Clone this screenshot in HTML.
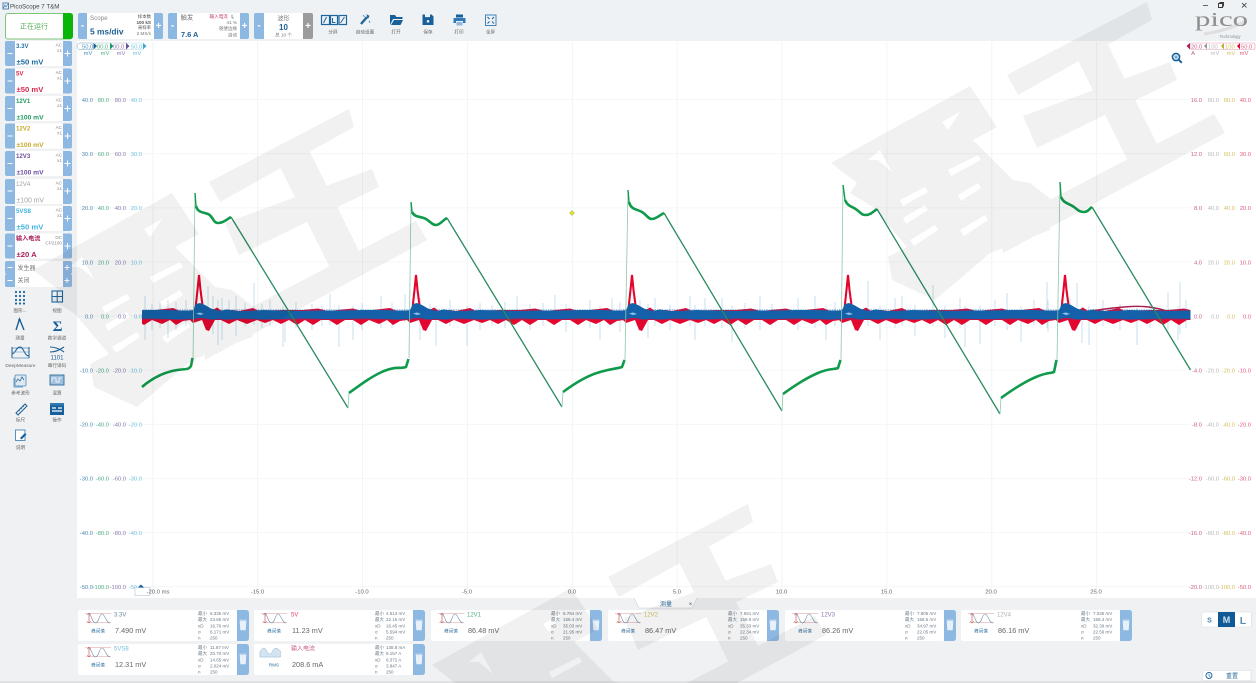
<!DOCTYPE html>
<html lang="zh"><head><meta charset="utf-8"><title>PicoScope 7 T&amp;M</title>
<style>
html,body{margin:0;padding:0;width:1256px;height:683px;overflow:hidden;background:#f0f1f2}
svg{display:block;position:absolute;left:0;top:0}
text{font-family:"Liberation Sans","Noto Sans CJK SC",sans-serif;fill:#555}
.ax text{font-size:5.800px;text-anchor:end}
.c1 text{fill:#4f8db5}.c2 text{fill:#4fae82}.c3 text{fill:#8e78b0}.c4 text{fill:#74c2de}
.r1 text{fill:#c8608a}.r2 text{fill:#b8b8b8}.r3 text{fill:#d3c060}.r4 text{fill:#e25c7c}
.tk{font-size:5.900px;text-anchor:middle;fill:#666}
.nm{font-size:6.100px;font-weight:bold}
.rg{font-size:7.700px;font-weight:bold}
.rh{font-size:6.700px;font-weight:bold}
.ac{font-size:4.600px;fill:#888;text-anchor:end}
.tl{font-size:4.600px;fill:#666;text-anchor:middle}
.ic{font-size:4.600px;fill:#666;text-anchor:middle}
.st{font-size:4.500px;fill:#6b7b88}
.cn{font-size:6px;fill:#777}
.cv{font-size:7.300px;fill:#666}
.cl{font-size:4.600px;fill:#2f6d9c;text-anchor:middle}
.b{fill:#8db8e2}
.pm{fill:#fff;font-size:10px;text-anchor:middle;font-weight:bold}
.blk{fill:none;stroke:#1c669f;stroke-width:1.200}
.gr{fill:none;stroke:#0f9a4c;stroke-width:2.600;stroke-linejoin:round}
.rm{fill:none;stroke:#2a8a5e;stroke-width:1.300}
.rs{fill:none;stroke:#8cc8aa;stroke-width:.8}
</style></head><body>
<svg width="1256" height="683" viewBox="0 0 1256 683" xmlns="http://www.w3.org/2000/svg">
<defs>
<clipPath id="tr"><rect x="142" y="250" width="1048.500" height="110"/></clipPath>
<g id="per">
<path fill="#e3062f" d="M-3 311L4 312 12 312 18 311 24 307.500 29 311 40 310 46 311 60 308 66 311 90 310 110 310 125 308.500 135 311 160 308.500 168 311 180 310 197 308 204 311 214 311 214 320 207 321 200 325 194 320 186 324 176 320 168 325 160 320 152 320 144 325 136 320 128 320 120 325 112 320 104 325 96 320 88 324 80 320 72 323 64 320 54 324 44 320 36 324 28 320 22 320 16 331 13 330 9 320 0 323 -3 320Z"/>
<path fill="none" stroke="#e3062f" stroke-width="2.100" d="M2 313L4.500 290 6 275 7.500 290 10.500 313"/>
<path d="M-3 314.500H214" stroke="#1561a9" stroke-width="11" stroke-dasharray=".6 1.100" opacity=".55"/>
<path fill="#1561a9" d="M-3 310.500L0 310 3 304 7 303 12 305 18 308.500 26 311 34 309.500 44 311 56 311 70 310 90 310.500 110 311 130 310.500 150 310.500 170 310 190 310 205 310.500 214 310.500 214 319 205 319.500 190 319 170 318.500 150 319 130 319 110 318.500 90 319 70 319.500 50 318.500 34 319.500 26 319 18 319.500 10 318 4 318 0 319.500 -3 319Z"/>
<path fill="#8cc6ea" d="M3 313.500L7 312.500 11 314 7 315Z"/>
</g>
<g id="card"><rect width="159" height="31" rx="2" fill="#fff"/><path d="M159 0h9q3 0 3 3v25q0 3-3 3h-9Z" class="b"/><path d="M162 11h6l-.6 9h-4.800Z M161.500 10h7" fill="#e8f1fa" stroke="#e8f1fa" stroke-width=".6"/></g>
<g id="wv"><path d="M0 1.500h26M1 10.500h25" stroke="#d99" stroke-width=".5"/><path d="M4 1.500v9" stroke="#c44" stroke-width=".6"/><path d="M2 3l2-2 2 2M2 9l2 2 2-2" fill="none" stroke="#c44" stroke-width=".5"/><path d="M3 2C7 2 7 11 10.500 11S14 2 17 2s4 9 8 9" fill="none" stroke="#6f8ea8" stroke-width=".6"/></g>
<g id="wm">
<path d="M1007 75L1147 2 1152 20 1018 95ZM1023 116L1170 62 1177 80 1037 148ZM1000 226L1214 114 1225 133 1003 253ZM1073 50L1103 35 1160 150 1130 165Z"/>
<path fill-rule="evenodd" d="M831 163L970 86 997 127 973 140 1013 180 1030 183 1052 200 1050 230 990 253 935 300 892 280 888 257 907 247 873 207 850 193 857 183ZM868 160L880 150 892 172 878 160ZM942 122L960 112 948 130ZM900 200L925 187 928 192 903 206ZM948 170L978 155 981 160 951 176ZM903 218L925 205 928 210 906 224ZM958 195L978 183 981 188 961 201ZM910 240L935 225 938 230 914 246ZM960 230L985 215 988 220 964 236Z"/>
</g>
</defs>

<!-- backgrounds -->
<rect width="1256" height="683" fill="#f0f1f2"/>
<rect width="1256" height="41" fill="#eff2f5"/>
<rect x="77" y="41" width="1179" height="557" fill="#fff"/>
<rect y="681" width="1256" height="2" fill="#e0e1e2"/>

<!-- grid -->
<g stroke="#f4f6f6" stroke-width=".8">
<path d="M78 99.500H1190M78 153.700H1190M78 207.800H1190M78 262H1190M78 316H1190M78 370H1190M78 424.300H1190M78 478.400H1190M78 532.500H1190M78 586.500H1190"/>
<path stroke="#edf3f3" d="M153 42V597M257.700 42V597M362.500 42V597M467.400 42V597M572.300 42V597M677.200 42V597M782 42V597M886.900 42V597M991.800 42V597M1096.700 42V597"/>
</g>

<!-- title bar -->
<rect x="3" y="3" width="5.500" height="6" fill="none" stroke="#2c6ea6" stroke-width=".8"/>
<path d="M3.500 8l1.500-3 1 2 2-3" fill="none" stroke="#2c6ea6" stroke-width=".6"/>
<text x="10" y="8.500" style="font-size:6.200px;fill:#444">PicoScope 7 T&amp;M</text>
<path d="M1203 5.500h5" stroke="#444" stroke-width=".8"/>
<path d="M1218.500 3.500h4v4h-4zM1220 3.500v-1h3.500v3.500h-1" fill="none" stroke="#333" stroke-width=".9"/>
<path d="M1242 3l4.500 4.500M1246.500 3L1242 7.500" stroke="#333" stroke-width=".8"/>

<!-- run button -->
<rect x="5.500" y="13.500" width="66.500" height="25.500" rx="2.500" fill="#fff" stroke="#7cc77c"/>
<path d="M63 13h7q3 0 3 3v20q0 3-3 3h-7Z" fill="#09b509"/>
<text x="34" y="28.500" style="font-size:7px;fill:#5cb05c;text-anchor:middle">正在运行</text>

<!-- scope -->
<rect x="78" y="13" width="85" height="26" rx="2" fill="#fff"/>
<path d="M87 13h-7q-2 0-2 2v22q0 2 2 2h7ZM154 13h7q2 0 2 2v22q0 2-2 2h-7Z" class="b"/>
<text x="82.500" y="28.500" class="pm">-</text><text x="158.500" y="29" class="pm">+</text>
<text x="90" y="20" style="font-size:6.200px;fill:#888">Scope</text>
<text x="90" y="34.500" style="font-size:8.400px;font-weight:bold;fill:#1c5f94">5 ms/div</text>
<text x="151" y="18" style="font-size:4.400px;text-anchor:end">样本数</text><text x="151" y="24" style="font-size:4.600px;font-weight:bold;text-anchor:end;fill:#555">100 kS</text><text x="151" y="29" style="font-size:4.400px;text-anchor:end">采样率</text><text x="151" y="35" style="font-size:4.600px;text-anchor:end;fill:#777">2 MS/s</text>

<!-- trigger -->
<rect x="168" y="13" width="81" height="26" rx="2" fill="#fff"/>
<path d="M177 13h-7q-2 0-2 2v22q0 2 2 2h7ZM240 13h7q2 0 2 2v22q0 2-2 2h-7Z" class="b"/>
<text x="172.500" y="28.500" class="pm">-</text><text x="244.500" y="29" class="pm">+</text>
<text x="180.500" y="19.500" style="font-size:6.400px;fill:#777">触发</text>
<text x="181" y="37" style="font-size:7.400px;font-weight:bold;fill:#1c5f94">7.6 A</text>
<text x="209.500" y="18" style="font-size:4.600px;fill:#c2386c">输入电流</text>
<path d="M232 14.500v3.500h2" fill="none" stroke="#555" stroke-width=".6"/>
<text x="237" y="24" style="font-size:4.600px;text-anchor:end;fill:#777">41 %</text>
<text x="237" y="30" style="font-size:4.500px;text-anchor:end;fill:#777">随便边缘</text>
<text x="237" y="36.500" style="font-size:4.500px;text-anchor:end;fill:#777">自动</text>

<!-- waveforms -->
<rect x="254" y="13" width="59" height="26" rx="2" fill="#fff"/>
<path d="M264 13h-8q-2 0-2 2v22q0 2 2 2h8Z" class="b"/>
<path d="M303 13h8q2 0 2 2v22q0 2-2 2h-8Z" fill="#9c9c9c"/>
<text x="259" y="28.500" class="pm">-</text><text x="308" y="29" class="pm">+</text>
<text x="283.500" y="20.500" style="font-size:6px;text-anchor:middle;fill:#777">波形</text>
<text x="283.500" y="30" style="font-size:8px;font-weight:bold;text-anchor:middle;fill:#1c5f94">10</text>
<text x="283.500" y="36.500" style="font-size:4.600px;text-anchor:middle;fill:#777">总 10 个</text>

<!-- toolbar -->
<g class="blk"><rect x="321.500" y="15.500" width="8" height="9"/><rect x="330.500" y="15.500" width="7" height="9"/><rect x="339" y="15.500" width="7.500" height="9"/>
<path d="M323.500 23l3-6M332.500 18v4.500h3M340.500 23l4-6" stroke-width="1"/></g>
<text x="333" y="33.500" class="tl">分屏</text>
<path d="M361 24l6-7" stroke="#1c669f" stroke-width="2.400"/><path d="M367 15l2 1-1 2zM363 15.500l1.500 1M369 21l1 1.500" stroke="#1c669f" fill="#1c669f" stroke-width=".8"/>
<text x="365" y="33.500" class="tl">自动设置</text>
<path d="M390 25V15h5l1.500 2h6v2h-9.500l-3 6zM391 25l3-5h9l-2.500 5z" fill="#17609b"/>
<text x="396" y="33.500" class="tl">打开</text>
<path d="M422.500 14.500h9l2 2v8.500h-11z" fill="#17609b"/><rect x="425" y="14.500" width="5" height="2.600" fill="#eff2f5"/><circle cx="428" cy="21.300" r="1.300" fill="#eff2f5"/>
<text x="428" y="33.500" class="tl">保存</text>
<path d="M456 14.500h7v3h-7z" fill="#17609b"/><path d="M453.500 18h12v5h-2.500v-2h-7v2h-2.500z" fill="#2f79b5"/><rect x="456.500" y="22" width="6" height="3.500" fill="#8db8e2"/>
<text x="459" y="33.500" class="tl">打印</text>
<rect x="485.500" y="15" width="10.500" height="10.500" fill="none" stroke="#2f79b5" stroke-width=".9"/><path d="M487.500 17l2 2M494 17l-2 2M487.500 23.500l2-2M494 23.500l-2-2" stroke="#17609b" stroke-width="1"/>
<text x="490.500" y="33.500" class="tl">全屏</text>

<!-- pico logo -->
<path d="M1204 34q22-3 42-13" fill="none" stroke="#dedede" stroke-width="3"/>
<text x="1195" y="26" textLength="53" lengthAdjust="spacingAndGlyphs" style="font-family:'Liberation Serif',serif;font-size:20px;fill:#8e8e8e">pico</text>
<text x="1230" y="38" style="font-size:4.200px;fill:#8e8e8e;text-anchor:middle">Technology</text>

<!-- channels -->
<g id="chs">
<path class="b" d="M15 41h-8q-2 0-2 2v21q0 2 2 2h8ZM63 41h7q2 0 2 2v21q0 2-2 2h-7ZM15 68.500h-8q-2 0-2 2v21q0 2 2 2h8ZM63 68.500h7q2 0 2 2v21q0 2-2 2h-7ZM15 96h-8q-2 0-2 2v21q0 2 2 2h8ZM63 96h7q2 0 2 2v21q0 2-2 2h-7ZM15 123.500h-8q-2 0-2 2v21q0 2 2 2h8ZM63 123.500h7q2 0 2 2v21q0 2-2 2h-7ZM15 151h-8q-2 0-2 2v21q0 2 2 2h8ZM63 151h7q2 0 2 2v21q0 2-2 2h-7ZM15 179h-8q-2 0-2 2v21q0 2 2 2h8ZM63 179h7q2 0 2 2v21q0 2-2 2h-7ZM15 206h-8q-2 0-2 2v21q0 2 2 2h8ZM63 206h7q2 0 2 2v21q0 2-2 2h-7ZM15 233.500h-8q-2 0-2 2v21q0 2 2 2h8ZM63 233.500h7q2 0 2 2v21q0 2-2 2h-7ZM15 261h-8q-2 0-2 1.500v10q0 1.500 2 1.500h8ZM63 261h7q2 0 2 1.500v10q0 1.500-2 1.500h-7ZM15 274h-8q-2 0-2 1.500v10q0 1.500 2 1.500h8ZM63 274h7q2 0 2 1.500v10q0 1.500-2 1.500h-7Z"/>
<g fill="#fff"><rect x="15" y="41" width="48" height="25"/><rect x="15" y="68.500" width="48" height="25"/><rect x="15" y="96" width="48" height="25"/><rect x="15" y="123.500" width="48" height="25"/><rect x="15" y="151" width="48" height="25"/><rect x="15" y="179" width="48" height="25"/><rect x="15" y="206" width="48" height="25"/><rect x="15" y="233.500" width="48" height="25"/><rect x="15" y="261" width="48" height="26"/></g>
<g stroke="#fff" stroke-width="1">
<path d="M7.500 53.500h5M7.500 81h5M7.500 108.500h5M7.500 136h5M7.500 163.500h5M7.500 191h5M7.500 218.500h5M7.500 246h5M7.500 267.500h5M7.500 280.500h5"/>
<path d="M64.500 53.500h6M67.500 50.500v6M64.500 81h6M67.500 78v6M64.500 108.500h6M67.500 105.500v6M64.500 136h6M67.500 133v6M64.500 163.500h6M67.500 160.500v6M64.500 191h6M67.500 188v6M64.500 218.500h6M67.500 215.500v6M64.500 246h6M67.500 243v6M64.500 267.500h5M67 265v5M64.500 280.500h5M67 278v5"/>
</g>
<text x="16" y="48" class="nm" style="fill:#2a72a8">3.3V</text><text x="16.500" y="64.500" class="rg" style="fill:#1c6aa0">±50 mV</text><text x="62" y="46.500" class="ac">AC</text><text x="62" y="52" class="ac">x1</text>
<text x="16" y="75.500" class="nm" style="fill:#d8264e">5V</text><text x="16.500" y="92" class="rg" style="fill:#d8264e">±50 mV</text><text x="62" y="74" class="ac">AC</text><text x="62" y="79.500" class="ac">x1</text>
<text x="16" y="103" class="nm" style="fill:#1f9a60">12V1</text><text x="16.500" y="119.500" class="rh" style="fill:#1f9a60">±100 mV</text><text x="62" y="101.500" class="ac">AC</text><text x="62" y="107" class="ac">x1</text>
<text x="16" y="130.500" class="nm" style="fill:#c9a82e">12V2</text><text x="16.500" y="147" class="rh" style="fill:#c9a82e">±100 mV</text><text x="62" y="129" class="ac">AC</text><text x="62" y="134.500" class="ac">x1</text>
<text x="16" y="158" class="nm" style="fill:#6a4c9c">12V3</text><text x="16.500" y="174.500" class="rh" style="fill:#6a4c9c">±100 mV</text><text x="62" y="156.500" class="ac">AC</text><text x="62" y="162" class="ac">x1</text>
<text x="16" y="186" style="font-size:6.100px;fill:#a0a0a0">12V4</text><text x="16.500" y="202.500" style="font-size:6.900px;fill:#a0a0a0">±100 mV</text><text x="62" y="184.500" class="ac">AC</text><text x="62" y="190" class="ac">x1</text>
<text x="16" y="213" class="nm" style="fill:#3fb4e0">5VS8</text><text x="16.500" y="229.500" class="rg" style="fill:#3fb4e0">±50 mV</text><text x="62" y="211.500" class="ac">AC</text><text x="62" y="217" class="ac">x1</text>
<text x="16" y="240.500" class="nm" style="fill:#a8205a">输入电流</text><text x="16.500" y="257" class="rg" style="fill:#a8205a">±20 A</text><text x="62" y="239" class="ac">DC</text><text x="62" y="244.500" class="ac">CP2100</text>
<text x="17.500" y="270" style="font-size:6px;fill:#777">发生器</text>
<text x="17.500" y="282.500" style="font-size:6px;fill:#777">关闭</text>
</g>

<!-- sidebar icons -->
<g fill="#1c669f"><circle cx="16" cy="292" r="1.100"/><circle cx="20" cy="292" r="1.100"/><circle cx="24" cy="292" r="1.100"/><circle cx="16" cy="296" r="1.100"/><circle cx="20" cy="296" r="1.100"/><circle cx="24" cy="296" r="1.100"/><circle cx="16" cy="300" r="1.100"/><circle cx="20" cy="300" r="1.100"/><circle cx="24" cy="300" r="1.100"/><circle cx="16" cy="303.500" r="1.100"/><circle cx="20" cy="303.500" r="1.100"/><circle cx="24" cy="303.500" r="1.100"/></g>
<text x="20" y="312" class="ic">图形...</text>
<rect x="52" y="291" width="10.500" height="11" fill="none" stroke="#1c669f" stroke-width="1.100"/><path d="M57.200 291v11M52 296.500h10.500" stroke="#1c669f" stroke-width="1"/>
<text x="57" y="312" class="ic">视图</text>
<path d="M16 330l3.500-11 4.500 11" fill="none" stroke="#1c5f94" stroke-width="1.400"/><circle cx="19.500" cy="320" r="1.300" fill="#1c5f94"/>
<text x="20" y="339.500" class="ic">测量</text>
<text x="57.500" y="331" style="font-size:15px;font-weight:bold;fill:#17609b;text-anchor:middle;font-family:'Liberation Serif',serif">Σ</text>
<text x="57" y="339.500" class="ic">数学通道</text>
<rect x="12" y="348" width="17" height="10" fill="none" stroke="#2a78b5" stroke-width=".6"/><path d="M12 358V347M29 358V347" stroke="#1c5f94" stroke-width="1"/><path d="M12 354c4-1 4-7 8-7s4 9 9 9" fill="none" stroke="#1c5f94" stroke-width="1"/><path d="M12 352h17" stroke="#4a90c8" stroke-width=".6"/>
<text x="20.500" y="367" class="ic" style="font-size:4.800px">DeepMeasure</text>
<path d="M50 347q7 0 14 5M50 352q7 0 14-5" fill="none" stroke="#1c5f94" stroke-width="1.100"/>
<text x="57" y="359.500" style="font-size:6px;fill:#1c5f94;text-anchor:middle">1101</text>
<text x="57" y="367" class="ic">串行译码</text>
<rect x="15" y="375" width="11" height="11" rx="1" fill="#dfe9f2" stroke="#4a88b8" stroke-width=".8"/><path d="M16 382l2-3 2 2 2-4 2 3" fill="none" stroke="#1c5f94" stroke-width=".7"/><path d="M14 378v9h9" fill="none" stroke="#4a88b8" stroke-width=".8"/>
<text x="20.500" y="394.500" class="ic">参考波形</text>
<rect x="50" y="375" width="14" height="10" fill="#9fc0dc" stroke="#1c5f94" stroke-width=".8"/><path d="M52 382v-4h4v4h3v-4h3" fill="none" stroke="#fff" stroke-width=".8"/>
<text x="57" y="394.500" class="ic">混算</text>
<path d="M16 413l9-9 2 2-9 9z" fill="none" stroke="#1c5f94" stroke-width="1"/><path d="M19 410l1 1M21 408l1 1M23 406l1 1" stroke="#1c5f94" stroke-width=".6"/>
<text x="20.500" y="421.500" class="ic">标尺</text>
<rect x="50" y="404" width="14" height="11" fill="#17609b"/><rect x="50" y="403" width="14" height="2.500" fill="#2f79b5"/><path d="M52 408h4M58 408h4M52 411h10" stroke="#fff" stroke-width="1.200"/>
<text x="57" y="421.500" class="ic">操作</text>
<rect x="15.500" y="430" width="9.500" height="10.500" fill="#fff" stroke="#4a88b8" stroke-width=".9"/><path d="M20 438l5-5 1.500 1.500-5 5z" fill="#17609b"/>
<text x="20.500" y="449" class="ic">说明</text>

<!-- left axis -->
<g class="ax">
<g class="c1"><text x="93" y="102">40.0</text><text x="93" y="156">30.0</text><text x="93" y="210">20.0</text><text x="93" y="264.300">10.0</text><text x="93" y="318.300">0.0</text><text x="93" y="372.300">-10.0</text><text x="93" y="426.600">-20.0</text><text x="93" y="480.700">-30.0</text><text x="93" y="534.800">-40.0</text><text x="93" y="588.800">-50.0</text></g>
<g class="c2"><text x="109" y="102">80.0</text><text x="109" y="156">60.0</text><text x="109" y="210">40.0</text><text x="109" y="264.300">20.0</text><text x="109" y="318.300">0.0</text><text x="109" y="372.300">-20.0</text><text x="109" y="426.600">-40.0</text><text x="109" y="480.700">-60.0</text><text x="109" y="534.800">-80.0</text><text x="109" y="588.800">-100.0</text></g>
<g class="c3"><text x="126" y="102">80.0</text><text x="126" y="156">60.0</text><text x="126" y="210">40.0</text><text x="126" y="264.300">20.0</text><text x="126" y="318.300">0.0</text><text x="126" y="372.300">-20.0</text><text x="126" y="426.600">-40.0</text><text x="126" y="480.700">-60.0</text><text x="126" y="534.800">-80.0</text><text x="126" y="588.800">-100.0</text></g>
<g class="c4"><text x="142" y="102">40.0</text><text x="142" y="156">30.0</text><text x="142" y="210">20.0</text><text x="142" y="264.300">10.0</text><text x="142" y="318.300">0.0</text><text x="142" y="372.300">-10.0</text><text x="142" y="426.600">-20.0</text><text x="142" y="480.700">-30.0</text><text x="142" y="534.800">-40.0</text><text x="142" y="588.800">-50.0</text></g>
</g>
<!-- right axis -->
<g class="ax">
<g class="r1"><text x="1202" y="102">16.0</text><text x="1202" y="156">12.0</text><text x="1202" y="210">8.0</text><text x="1202" y="264.300">4.0</text><text x="1202" y="318.300">0.0</text><text x="1202" y="372.300">-4.0</text><text x="1202" y="426.600">-8.0</text><text x="1202" y="480.700">-12.0</text><text x="1202" y="534.800">-16.0</text><text x="1202" y="588.800">-20.0</text></g>
<g class="r2"><text x="1219" y="102">80.0</text><text x="1219" y="156">60.0</text><text x="1219" y="210">40.0</text><text x="1219" y="264.300">20.0</text><text x="1219" y="318.300">0.0</text><text x="1219" y="372.300">-20.0</text><text x="1219" y="426.600">-40.0</text><text x="1219" y="480.700">-60.0</text><text x="1219" y="534.800">-80.0</text><text x="1219" y="588.800">-100.0</text></g>
<g class="r3"><text x="1235" y="102">80.0</text><text x="1235" y="156">60.0</text><text x="1235" y="210">40.0</text><text x="1235" y="264.300">20.0</text><text x="1235" y="318.300">0.0</text><text x="1235" y="372.300">-20.0</text><text x="1235" y="426.600">-40.0</text><text x="1235" y="480.700">-60.0</text><text x="1235" y="534.800">-80.0</text><text x="1235" y="588.800">-100.0</text></g>
<g class="r4"><text x="1251" y="102">40.0</text><text x="1251" y="156">30.0</text><text x="1251" y="210">20.0</text><text x="1251" y="264.300">10.0</text><text x="1251" y="318.300">0.0</text><text x="1251" y="372.300">-10.0</text><text x="1251" y="426.600">-20.0</text><text x="1251" y="480.700">-30.0</text><text x="1251" y="534.800">-40.0</text><text x="1251" y="588.800">-50.0</text></g>
</g>

<!-- channel headers -->
<rect x="77" y="43" width="18" height="6.500" rx="3" fill="#fff" stroke="#6fa3c8" stroke-width=".5"/>
<rect x="95" y="43" width="16" height="6.500" fill="#fff" stroke="#7cc0a0" stroke-width=".4"/>
<rect x="111" y="43" width="16" height="6.500" fill="#fff" stroke="#a795c2" stroke-width=".4"/>
<rect x="127" y="43" width="16" height="6.500" fill="#fff" stroke="#9bd3e8" stroke-width=".4"/>
<path d="M93.500 43l3.500 3-3.500 3.500z" fill="#1c5f94"/><path d="M110 43l3.500 3-3.500 3.500z" fill="#0f9a6a"/><path d="M126 43l3.500 3-3.500 3.500z" fill="#6a4c9c"/><path d="M143 43l3.500 3-3.500 3.500z" fill="#3fa4d8"/>
<text x="82" y="48.500" style="font-size:5.800px;fill:#4f8db5">50.0</text><text x="97" y="48.500" style="font-size:5.800px;fill:#4fae82">00.0</text><text x="113" y="48.500" style="font-size:5.800px;fill:#8e78b0">00.0</text><text x="131" y="48.500" style="font-size:5.800px;fill:#74c2de">50.0</text>
<text x="88" y="55" class="tk" style="font-size:5.800px;fill:#4f8db5">mV</text><text x="105" y="55" class="tk" style="font-size:5.800px;fill:#4fae82">mV</text><text x="121" y="55" class="tk" style="font-size:5.800px;fill:#8e78b0">mV</text><text x="137" y="55" class="tk" style="font-size:5.800px;fill:#74c2de">mV</text>

<rect x="1190" y="43" width="65" height="6.500" rx="1.500" fill="#fff" stroke="#e39ab4" stroke-width=".6"/>
<path d="M1190 43l-3.500 3 3.500 3.500z" fill="#a8205a"/><path d="M1207 43l-3 3 3 3.500z" fill="#999"/><path d="M1224 43l-3 3 3 3.500z" fill="#c9a82e"/><path d="M1240 43l-3 3 3 3.500z" fill="#e3062f"/>
<text x="1191" y="48.500" style="font-size:5.800px;fill:#c8608a">20.0</text><text x="1208" y="48.500" style="font-size:5.800px;fill:#b8b8b8">100</text><text x="1225" y="48.500" style="font-size:5.800px;fill:#d3c060">100</text><text x="1241" y="48.500" style="font-size:5.800px;fill:#e25c7c">50.0</text>
<text x="1193" y="55" class="tk" style="font-size:5.800px;fill:#c8608a">A</text><text x="1215" y="55" class="tk" style="font-size:5.800px;fill:#b8b8b8">mV</text><text x="1231" y="55" class="tk" style="font-size:5.800px;fill:#d3c060">mV</text><text x="1244" y="55" class="tk" style="font-size:5.800px;fill:#e25c7c">mV</text>

<!-- magnifier -->
<circle cx="1176" cy="57" r="3.600" fill="#cfe2f2" stroke="#17609b" stroke-width="1.500"/><path d="M1178.800 59.800l3 3" stroke="#17609b" stroke-width="2"/><path d="M1174.500 57h3M1176 55.500v3" stroke="#17609b" stroke-width=".6"/>

<!-- spikes -->
<path fill="none" stroke="#a3cbe2" stroke-width=".6" d="M145 296V340M152 304V330M160 303V328M168 300V338M176 302V330M186 300V326M208 286V330M213 296V334M218 300V345M222 298V340M229 300V322M236 296V336M245 303V326M254 283V325M262 304V328M270 300V326M283 306V347M285 310V342M296 302V328M312 304V330M322 306V326M330 294V325M339 305V347M353 306V340M362 303V330M381 296V328M392 303V328M405 294V322M420 298V340M430 304V322M436 306V346M450 300V326M467 306V346M480 303V330M492 305V326M505 302V328M517 296V325M530 304V330M543 303V326M555 295V325M566 304V332M590 300V328M600 306V340M612 298V326M620 302V332M640 300V328M648 304V338M655 298V326M670 305V330M690 296V326M695 305V340M705 298V326M722 298V328M732 306V342M745 303V328M760 296V330M772 304V326M798 298V330M815 296V328M826 306V340M835 302V326M868 281V326M880 306V340M895 298V328M902 296V326M915 305V336M933 285V326M945 306V338M960 298V328M965 306V347M980 306V344M995 300V326M1007 293V330M1021 306V342M1034 300V325M1047 282V328M1048 300V332M1070 298V326M1077 283V330M1082 306V343M1089 306V345M1103 300V326M1120 304V330M1137 306V345M1150 302V328M1168 292V330M1178 306V340M1180 282V334M1186 300V328"/>

<!-- red + blue bands -->
<g clip-path="url(#tr)">
<use href="#per" x="-24"/><use href="#per" x="193"/><use href="#per" x="410"/><use href="#per" x="626"/><use href="#per" x="842"/><use href="#per" x="1059"/>
</g>
<path d="M1095 310.500q18-3 36-4t34 4" fill="none" stroke="#a82050" stroke-width="1.400"/>

<!-- green trace -->
<path class="rs" d="M193 362L195 193M409 358L411 202M625 360L628 190M841 360L843 185M1057 360L1060 182"/>
<path class="rm" d="M231 217L348 408M447 218L562 407M664 213L782 411M877 209L1000 414M1092 207L1190.500 370"/>
<path class="rs" d="M348 408L349 393M562 407L563 392M782 411L783 394M1000 414L1001 398"/>
<path class="gr" d="M142 387C150 380 160 374 172 371S188 371 191 366L192.500 358"/>
<path class="gr" d="M349 393C360 385 372 376 384 371S400 369 406 367L408.500 359"/>
<path class="gr" d="M563 392C574 384 586 376 600 372S616 369 622 367L624.500 360"/>
<path class="gr" d="M783 394C794 386 806 378 818 373S832 370 838 368L840.500 360"/>
<path class="gr" d="M1001 398C1012 390 1024 382 1036 377S1048 374 1054 372L1056.500 360"/>
<path class="gr" style="stroke-width:1.400" d="M195 193L196 206"/><path class="gr" d="M196 206C198 213 203 212 208 214S213 223 218 223 226 220 231 217"/>
<path class="gr" style="stroke-width:1.400" d="M411 202L412 212"/><path class="gr" d="M412 212C415 218 421 216 426 219S432 225 436 225 443 220 447 218"/>
<path class="gr" style="stroke-width:1.400" d="M628 190L629 202"/><path class="gr" d="M629 202C631 210 637 209 642 212S648 219 652 219 660 215 664 213"/>
<path class="gr" style="stroke-width:1.400" d="M843 185L845 200"/><path class="gr" d="M845 200C848 207 852 206 857 210S862 215 866 215 873 212 877 209"/>
<path class="gr" style="stroke-width:1.400" d="M1060 182L1061 197"/><path class="gr" d="M1061 197C1064 204 1069 203 1074 207S1080 212 1084 212 1089 209 1092 207"/>

<!-- trigger diamond -->
<path d="M572 210.500l2.500 2.500-2.500 2.500-2.500-2.500z" fill="#e8e23c" stroke="#9a9a30" stroke-width=".5"/>

<!-- time axis -->
<path d="M135 587.500h15v8h-15z" fill="#fff" stroke="#9ab8d0" stroke-width=".5"/>
<path d="M138 587.500l3-3 3 3z" fill="#17609b"/>
<text x="158" y="593.500" class="tk">-20.0 ms</text>
<text x="257.500" y="593.500" class="tk">-15.0</text><text x="362" y="593.500" class="tk">-10.0</text><text x="467" y="593.500" class="tk">-5.0</text><text x="572" y="593.500" class="tk">0.0</text><text x="677" y="593.500" class="tk">5.0</text><text x="781.500" y="593.500" class="tk">10.0</text><text x="886.500" y="593.500" class="tk">15.0</text><text x="991" y="593.500" class="tk">20.0</text><text x="1096" y="593.500" class="tk">25.0</text>

<!-- measure tab -->
<path d="M634 598l5 10h53l5-10" fill="#fff" stroke="#c4ccd4" stroke-width=".5"/>
<text x="666" y="606" style="font-size:6px;fill:#2f6d9e;text-anchor:middle">测量</text>
<text x="690.500" y="606" style="font-size:6px;fill:#555;text-anchor:middle">×</text>

<!-- measurement cards -->
<g transform="translate(78,610)"><use href="#card"/><use href="#wv" x="7" y="2"/><text x="20" y="22.500" class="cl">峰间值</text><text x="36" y="6.500" class="cn" style="fill:#6a8aa0">3.3V</text><text x="37" y="23" class="cv">7.490 mV</text>
<text x="120" y="5" class="st">最小</text><text x="132" y="5" class="st">6.335 mV</text><text x="120" y="11" class="st">最大</text><text x="132" y="11" class="st">23.65 mV</text><text x="120" y="17.500" class="st">xD</text><text x="132" y="17.500" class="st">16.76 mV</text><text x="120" y="23.500" class="st">σ</text><text x="132" y="23.500" class="st">6.171 mV</text><text x="120" y="29.500" class="st">n</text><text x="132" y="29.500" class="st">250</text></g>
<g transform="translate(254,610)"><use href="#card"/><use href="#wv" x="7" y="2"/><text x="20" y="22.500" class="cl">峰间值</text><text x="37" y="6.500" class="cn" style="fill:#e0466a">5V</text><text x="38" y="23" class="cv">11.23 mV</text>
<text x="121" y="5" class="st">最小</text><text x="132" y="5" class="st">4.513 mV</text><text x="121" y="11" class="st">最大</text><text x="132" y="11" class="st">22.16 mV</text><text x="121" y="17.500" class="st">xD</text><text x="132" y="17.500" class="st">16.45 mV</text><text x="121" y="23.500" class="st">σ</text><text x="132" y="23.500" class="st">5.594 mV</text><text x="121" y="29.500" class="st">n</text><text x="132" y="29.500" class="st">250</text></g>
<g transform="translate(431,610)"><use href="#card"/><use href="#wv" x="7" y="2"/><text x="20" y="22.500" class="cl">峰间值</text><text x="36" y="6.500" class="cn" style="fill:#4fae82">12V1</text><text x="37" y="23" class="cv">86.48 mV</text>
<text x="120" y="5" class="st">最小</text><text x="132" y="5" class="st">6.784 mV</text><text x="120" y="11" class="st">最大</text><text x="132" y="11" class="st">158.4 mV</text><text x="120" y="17.500" class="st">xD</text><text x="132" y="17.500" class="st">35.03 mV</text><text x="120" y="23.500" class="st">σ</text><text x="132" y="23.500" class="st">21.95 mV</text><text x="120" y="29.500" class="st">n</text><text x="132" y="29.500" class="st">250</text></g>
<g transform="translate(608,610)"><use href="#card"/><use href="#wv" x="7" y="2"/><text x="20" y="22.500" class="cl">峰间值</text><text x="36" y="6.500" class="cn" style="fill:#d3c060">12V2</text><text x="37" y="23" class="cv">86.47 mV</text>
<text x="120" y="5" class="st">最小</text><text x="132" y="5" class="st">7.551 mV</text><text x="120" y="11" class="st">最大</text><text x="132" y="11" class="st">158.9 mV</text><text x="120" y="17.500" class="st">xD</text><text x="132" y="17.500" class="st">35.33 mV</text><text x="120" y="23.500" class="st">σ</text><text x="132" y="23.500" class="st">22.34 mV</text><text x="120" y="29.500" class="st">n</text><text x="132" y="29.500" class="st">250</text></g>
<g transform="translate(785,610)"><use href="#card"/><use href="#wv" x="7" y="2"/><text x="20" y="22.500" class="cl">峰间值</text><text x="36" y="6.500" class="cn" style="fill:#8e78b0">12V3</text><text x="37" y="23" class="cv">86.26 mV</text>
<text x="120" y="5" class="st">最小</text><text x="132" y="5" class="st">7.805 mV</text><text x="120" y="11" class="st">最大</text><text x="132" y="11" class="st">158.6 mV</text><text x="120" y="17.500" class="st">xD</text><text x="132" y="17.500" class="st">34.97 mV</text><text x="120" y="23.500" class="st">σ</text><text x="132" y="23.500" class="st">22.05 mV</text><text x="120" y="29.500" class="st">n</text><text x="132" y="29.500" class="st">250</text></g>
<g transform="translate(961,610)"><use href="#card"/><use href="#wv" x="7" y="2"/><text x="20" y="22.500" class="cl">峰间值</text><text x="36" y="6.500" class="cn" style="fill:#b0b0b0">12V4</text><text x="37" y="23" class="cv">86.16 mV</text>
<text x="120" y="5" class="st">最小</text><text x="132" y="5" class="st">7.035 mV</text><text x="120" y="11" class="st">最大</text><text x="132" y="11" class="st">158.4 mV</text><text x="120" y="17.500" class="st">xD</text><text x="132" y="17.500" class="st">32.39 mV</text><text x="120" y="23.500" class="st">σ</text><text x="132" y="23.500" class="st">22.59 mV</text><text x="120" y="29.500" class="st">n</text><text x="132" y="29.500" class="st">250</text></g>
<g transform="translate(78,644)"><use href="#card"/><use href="#wv" x="7" y="2"/><text x="20" y="22.500" class="cl">峰间值</text><text x="36" y="6.500" class="cn" style="fill:#74c2de">5VS8</text><text x="37" y="23" class="cv">12.31 mV</text>
<text x="120" y="5" class="st">最小</text><text x="132" y="5" class="st">11.87 mV</text><text x="120" y="11" class="st">最大</text><text x="132" y="11" class="st">20.70 mV</text><text x="120" y="17.500" class="st">xD</text><text x="132" y="17.500" class="st">14.65 mV</text><text x="120" y="23.500" class="st">σ</text><text x="132" y="23.500" class="st">2.024 mV</text><text x="120" y="29.500" class="st">n</text><text x="132" y="29.500" class="st">250</text></g>
<g transform="translate(254,644)"><use href="#card"/><path d="M7 13V7C10 1 13 1 15 6S20 10 22 6 26 1 31 6V13Z" fill="#d3e4f2" stroke="#7fa4c0" stroke-width=".5" transform="translate(0,2) scale(.85)"/><text x="20" y="22.500" class="cl">RMS</text><text x="37" y="6.500" class="cn" style="fill:#c8608a">输入电流</text><text x="38" y="23" class="cv">208.6 mA</text>
<text x="121" y="5" class="st">最小</text><text x="132" y="5" class="st">138.8 mA</text><text x="121" y="11" class="st">最大</text><text x="132" y="11" class="st">9.157 A</text><text x="121" y="17.500" class="st">xD</text><text x="132" y="17.500" class="st">6.372 A</text><text x="121" y="23.500" class="st">σ</text><text x="132" y="23.500" class="st">3.847 A</text><text x="121" y="29.500" class="st">n</text><text x="132" y="29.500" class="st">250</text></g>

<!-- S M L -->
<rect x="1201.500" y="612" width="50" height="15" rx="2" fill="#fff" stroke="#d8dde2" stroke-width=".6"/>
<rect x="1218" y="612" width="17" height="15" fill="#0f5a96"/>
<text x="1209.500" y="622.500" style="font-size:7px;font-weight:bold;fill:#3f7fa8;text-anchor:middle">S</text>
<text x="1226.500" y="623" style="font-size:9px;font-weight:bold;fill:#cfe2f2;text-anchor:middle">M</text>
<text x="1243" y="624" style="font-size:10.500px;font-weight:bold;fill:#5a8fb8;text-anchor:middle">L</text>

<!-- reset -->
<rect x="1202.500" y="670.500" width="48.500" height="10" rx="1.500" fill="#fff" stroke="#d8dde2" stroke-width=".6"/>
<circle cx="1209" cy="675.500" r="3" fill="none" stroke="#1c5f94" stroke-width=".9"/><path d="M1209 673.800v2l1.500 .8" fill="none" stroke="#1c5f94" stroke-width=".6"/>
<text x="1232" y="678" style="font-size:6px;fill:#2f6d9e;text-anchor:middle">重置</text>

<!-- watermark -->
<g fill="#000" opacity=".058" style="pointer-events:none">
<use href="#wm"/>
<use href="#wm" x="-798" y="107"/>
<path d="M608 577L748 504 753 522 619 597ZM624 618L771 564 778 582 638 650ZM687 683L815 616 826 635 737 683ZM674 552L704 537 761 652 731 667Z"/>
<path fill-rule="evenodd" d="M432 665L571 588 598 629 574 642 614 682 620 683 455 683ZM469 662L481 652 493 674 479 662ZM543 624L561 614 549 632ZM549 672L579 657 582 662 552 678Z"/>
</g>
</svg>
</body></html>
